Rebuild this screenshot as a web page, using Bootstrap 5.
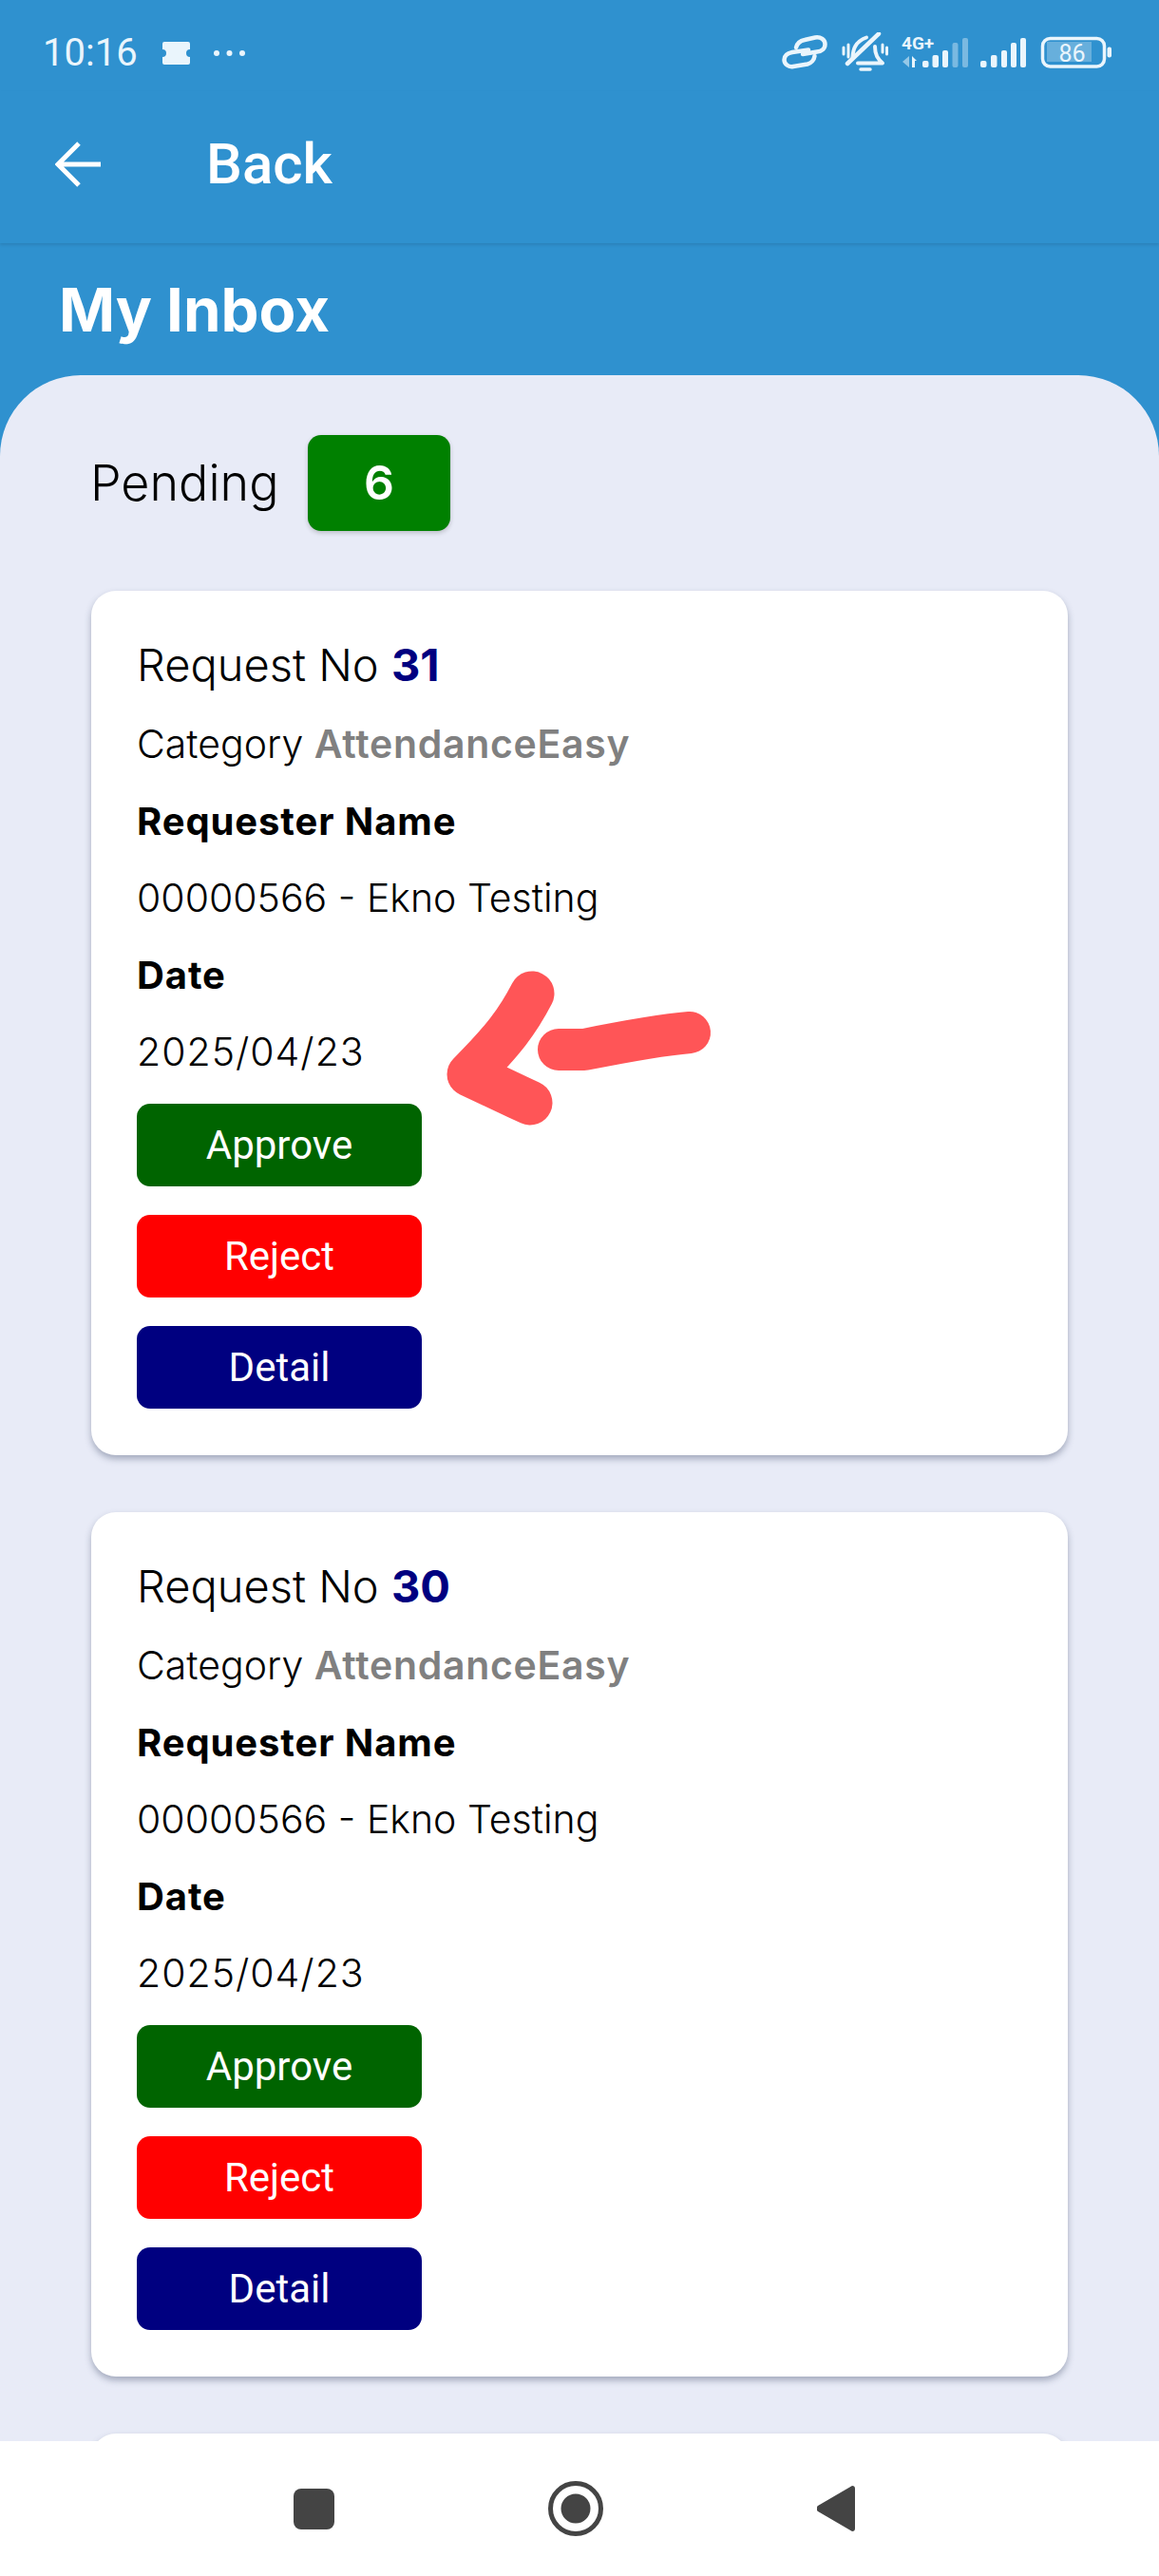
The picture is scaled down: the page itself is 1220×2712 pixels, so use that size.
<!DOCTYPE html>
<html lang="en">
<head>
<meta charset="utf-8">
<title>My Inbox</title>
<link href="https://cdn.jsdelivr.net/npm/bootstrap@5.3.0/dist/css/bootstrap.min.css" rel="stylesheet">
<style>
html,body{margin:0;height:2712px;overflow:hidden}
body{background:#2f91cf;font-family:Inter,"Liberation Sans",sans-serif;color:#000;position:relative}
.app-frame{height:2712px}
.status-row{height:96px;padding:16px 48px 0 45px;color:#eaf5fc}
.status-time{font-family:Roboto,sans-serif;font-size:40px;line-height:1}
.ticket-ico{margin-left:26px}
.dots-ico{margin-left:25px}
.appbar-row{height:160px;padding:0 0 6px 58px;box-shadow:0 2px 3px rgba(0,0,0,.1)}
.appbar-title{font-family:Roboto,sans-serif;font-weight:500;font-size:60px;color:#fff;margin-left:111px;line-height:1}
.inbox-title{height:139px;padding-left:62px;color:#fff;font-size:63.500px;font-weight:700;line-height:1}
.panel-sheet{background:#e8ebf7;border-radius:85px 85px 0 0;padding:63px 96px 0;overflow:hidden;min-height:0}
.pending-label{font-size:52px;line-height:1;width:228px;font-weight:300;margin-left:-1px;margin-right:1px}
.pending-count{width:150px;height:101px;background:#008000;border-radius:14px;color:#fff;font-size:50px;font-weight:600;box-shadow:0 2px 5px rgba(0,0,0,.2)}
.pending-row{margin-bottom:63px}
.req-card{height:910px;flex-shrink:0;border:0;border-radius:26px;box-shadow:0 4px 7px rgba(70,80,110,.42);margin-bottom:60px;padding:0 48px}
.req-line{font-size:41px;line-height:81px;white-space:nowrap;font-weight:300}
.req-line.first{font-size:47px;line-height:87px;padding-top:34px}
.req-line.strong{font-size:40px;font-weight:700;letter-spacing:.9px}
.req-num{color:#000080;font-weight:700}
.req-cat{color:#808080;font-weight:600;letter-spacing:.7px}
.req-date{margin-bottom:14px;letter-spacing:1px}
.req-btn{display:block;width:300px;height:87px;border:0;border-radius:14px;color:#fff;font-family:Roboto,sans-serif;font-size:42px;padding:0;margin-bottom:30px;line-height:87px}
.bg-approve,.bg-approve:hover{background:#006400;color:#fff}
.bg-reject,.bg-reject:hover{background:#f00;color:#fff}
.bg-detail,.bg-detail:hover{background:#000080;color:#fff}
.nav-strip{height:142px;background:#fff;gap:225px;padding-right:11px}
.arrow-mark{position:absolute;left:440px;top:1000px}
</style>
</head>
<body>
<div class="app-frame d-flex flex-column">
  <div class="status-row d-flex align-items-center justify-content-between flex-shrink-0">
    <div class="d-flex align-items-center">
      <span class="status-time">10:16</span>
      <svg class="ticket-ico" width="29" height="24" viewBox="0 0 29 24"><path fill="#eaf5fc" d="M2 0h25a2 2 0 0 1 2 2v6a4 4 0 0 0 0 8v6a2 2 0 0 1-2 2H2a2 2 0 0 1-2-2v-6a4 4 0 0 0 0-8V2a2 2 0 0 1 2-2z"/></svg>
      <svg class="dots-ico" width="33" height="8" viewBox="0 0 33 8"><g fill="#eaf5fc"><circle cx="3" cy="4" r="3"/><circle cx="16.500" cy="4" r="3"/><circle cx="30" cy="4" r="3"/></g></svg>
    </div>
    <svg width="350" height="44" viewBox="820 34 350 44">
      <g fill="none" stroke="#eaf5fc" stroke-linecap="round" stroke-linejoin="round">
        <path stroke-width="4.500" d="M836 50C837 46 840 43 845 42L856 39.500C862 38.500 866.500 42 866.500 46.500C866.500 51 863 54 858 54.500L843 57"/>
        <path stroke-width="4.500" d="M849 52.500L832 55C827 56 823.500 58.500 823.500 63C823.500 67.500 828 71 833 70L848 67.500C852 66.500 855 63 855.500 59"/>
        <path stroke-width="4.500" d="M890 67 923 35.500"/>
        <path stroke-width="4" d="M895.500 60C896 52 898 44 910 39.500M919 49C919 58 922 62 927 66.500H901"/>
        <path stroke-width="3" d="M886 50v7M891 47v13M927 47v8M931.500 50v7"/>
        <path stroke-width="3.500" d="M904 73h10"/>
      </g>
      <text x="947" y="52" font-family="Roboto,sans-serif" font-weight="700" font-size="19" fill="#eaf5fc">4G+</text>
      <g fill="#eaf5fc">
        <path opacity=".55" d="M955 59v12l-7-6z"/>
        <path d="M958 59l5 5h-2v7h-3z"/>
        <rect x="969" y="64" width="6.500" height="7" rx="2"/>
        <rect x="979.500" y="58" width="6.500" height="13" rx="2"/>
        <rect x="990" y="53" width="6" height="18" rx="2"/>
        <rect opacity=".4" x="1000.500" y="45" width="6" height="26" rx="2"/>
        <rect opacity=".4" x="1011" y="40" width="6" height="31" rx="2"/>
        <rect x="1030" y="64" width="6.500" height="7" rx="2"/>
        <rect x="1041" y="58" width="6.500" height="13" rx="2"/>
        <rect x="1052" y="53" width="6" height="18" rx="2"/>
        <rect x="1062" y="45" width="6" height="26" rx="2"/>
        <rect x="1072" y="40" width="6" height="31" rx="2"/>
        <rect opacity=".3" x="1100" y="44" width="47" height="21"/>
        <rect x="1163.500" y="49.500" width="4.500" height="11" rx="2"/>
      </g>
      <rect x="1095.500" y="40.500" width="65" height="29.500" rx="8" fill="none" stroke="#eaf5fc" stroke-width="3.500"/>
      <text x="1126.500" y="64.500" text-anchor="middle" font-family="Roboto,sans-serif" font-size="25" fill="#eaf5fc">86</text>
    </svg>
  </div>
  <div class="appbar-row d-flex align-items-center flex-shrink-0">
    <svg width="48" height="48" viewBox="0 0 48 48"><path d="M48 24H3M25 2 3 24l22 22" fill="none" stroke="#fff" stroke-width="5"/></svg>
    <span class="appbar-title">Back</span>
  </div>
  <div class="inbox-title d-flex align-items-center flex-shrink-0">My Inbox</div>
  <div class="panel-sheet flex-grow-1 d-flex flex-column">
    <div class="pending-row d-flex align-items-center flex-shrink-0">
      <span class="pending-label">Pending</span>
      <span class="pending-count d-flex align-items-center justify-content-center">6</span>
    </div>
    <div class="card req-card">
      <div class="req-line first">Request No <span class="req-num">31</span></div>
      <div class="req-line">Category <span class="req-cat">AttendanceEasy</span></div>
      <div class="req-line strong">Requester Name</div>
      <div class="req-line">00000566 - Ekno Testing</div>
      <div class="req-line strong">Date</div>
      <div class="req-line req-date">2025/04/23</div>
      <button class="btn req-btn bg-approve">Approve</button>
      <button class="btn req-btn bg-reject">Reject</button>
      <button class="btn req-btn bg-detail">Detail</button>
    </div>
    <div class="card req-card">
      <div class="req-line first">Request No <span class="req-num">30</span></div>
      <div class="req-line">Category <span class="req-cat">AttendanceEasy</span></div>
      <div class="req-line strong">Requester Name</div>
      <div class="req-line">00000566 - Ekno Testing</div>
      <div class="req-line strong">Date</div>
      <div class="req-line req-date">2025/04/23</div>
      <button class="btn req-btn bg-approve">Approve</button>
      <button class="btn req-btn bg-reject">Reject</button>
      <button class="btn req-btn bg-detail">Detail</button>
    </div>
    <div class="card req-card"></div>
  </div>
  <div class="nav-strip d-flex align-items-center justify-content-center flex-shrink-0">
    <svg width="43" height="43" viewBox="0 0 43 43"><rect width="43" height="43" rx="8" fill="#444"/></svg>
    <svg width="58" height="58" viewBox="0 0 58 58"><circle cx="29" cy="29" r="26.500" fill="none" stroke="#444" stroke-width="5"/><circle cx="29" cy="29" r="15.500" fill="#444"/></svg>
    <svg width="40" height="48" viewBox="0 0 40 48"><path d="M37 0a3 3 0 0 1 3 3v42a3 3 0 0 1-3 3L1 27a4 4 0 0 1 0-6z" fill="#444"/></svg>
  </div>
</div>
<svg class="arrow-mark" width="320" height="200" viewBox="440 1000 320 200" aria-hidden="true">
  <path d="M560 1046C545 1075 530 1095 494 1131L545 1155 558 1161" fill="none" stroke="#ff5557" stroke-width="47" stroke-linecap="round" stroke-linejoin="round"/>
  <path d="M588 1105 615 1105C650 1098 690 1090 726 1087" fill="none" stroke="#ff5557" stroke-width="44" stroke-linecap="round" stroke-linejoin="round"/>
</svg>
<script src="https://cdn.jsdelivr.net/npm/bootstrap@5.3.0/dist/js/bootstrap.bundle.min.js"></script>
</body>
</html>
